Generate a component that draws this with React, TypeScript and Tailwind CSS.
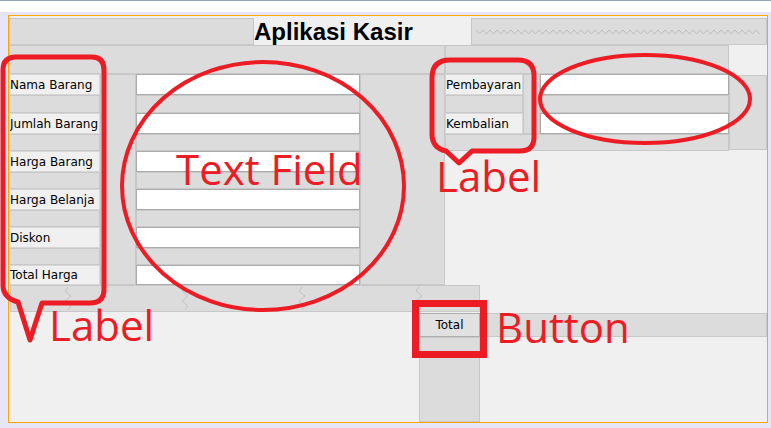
import React from 'react'

const gapBox = 'bg-[#dcdcdc] border border-[#c8c8c8]'
const labelBox = 'bg-[#f0f0f0] border border-[#d6d6d6] flex items-center text-[12px] text-black whitespace-nowrap overflow-hidden'
const fieldBox = 'bg-white border border-[#ababab]'

const leftLabels = ['Nama Barang', 'Jumlah Barang', 'Harga Barang', 'Harga Belanja', 'Diskon', 'Total Harga']
const rowHeights = [21, 21, 21, 21, 21, 20]
const gapHeights = [18, 17, 17, 17, 17]

function zigzagPoints(width: number) {
  const pts: string[] = []
  for (let x = 0, i = 0; x <= width; x += 3.5, i++) {
    pts.push(`${x},${i % 2 === 0 ? 2 : 6}`)
  }
  return pts.join(' ')
}

function VZigzag() {
  return (
    <svg width="8" height="25" viewBox="0 0 8 25" className="shrink-0">
      <polyline points="4,1 1,5 7,10 1,15 7,20 4,24" fill="none" stroke="#c2c2c2" strokeWidth="1" />
    </svg>
  )
}

function FormColumn({ width, labels }: { width: string; labels?: string[] }) {
  return (
    <div className={`${width} flex flex-col`}>
      {rowHeights.map((h, i) => (
        <React.Fragment key={i}>
          {labels ? (
            <div className={labelBox} style={{ height: h }}>{labels[i]}</div>
          ) : (
            <div className={fieldBox} style={{ height: h }} />
          )}
          {i < gapHeights.length && <div className={gapBox} style={{ height: gapHeights[i] }} />}
        </React.Fragment>
      ))}
    </div>
  )
}

export default function App() {
  return (
    <div className="relative w-[771px] h-[428px] overflow-hidden bg-[#e6e6f8] font-['DejaVu_Sans',sans-serif]">
      {/* strip atas */}
      <div className="h-[12px] bg-white border-t border-[#8fa5bf]" />

      {/* frame desain */}
      <div className="mt-[3px] ml-[8px] w-[760px] h-[408px] border border-[#ffa500] bg-[#f0f0f0] flex flex-col">
        {/* judul */}
        <div className="mt-[2px] h-[27px] flex">
          <div className={`w-[245px] ${gapBox}`} />
          <div className="w-[217px] flex items-center font-['Liberation_Sans',sans-serif] text-[24px] font-bold text-black leading-none">
            Aplikasi Kasir
          </div>
          <div className={`flex-1 ${gapBox} flex items-center pl-[4px]`}>
            <svg width="286" height="8" viewBox="0 0 286 8">
              <polyline points={zigzagPoints(286)} fill="none" stroke="#bdbdbd" strokeWidth="1" />
            </svg>
          </div>
        </div>

        {/* form */}
        <div className="flex items-start">
          <div className="w-[436px] h-[240px] flex flex-col bg-[#dcdcdc]">
            <div className={`h-[29px] ${gapBox}`} />
            <div className="flex h-[211px]">
              <FormColumn width="w-[91px]" labels={leftLabels} />
              <div className={`w-[36px] ${gapBox}`} />
              <FormColumn width="w-[224px]" />
              <div className={`w-[85px] ${gapBox}`} />
            </div>
          </div>

          <div className="w-[284px] h-[106px] flex flex-col bg-[#dcdcdc]">
            <div className={`h-[29px] ${gapBox}`} />
            <div className="flex">
              <div className="w-[78px] flex flex-col">
                <div className={`h-[21px] ${labelBox}`}>Pembayaran</div>
                <div className={`h-[18px] ${gapBox}`} />
                <div className={`h-[21px] ${labelBox}`}>Kembalian</div>
              </div>
              <div className={`w-[17px] h-[60px] ${gapBox}`} />
              <div className="w-[189px] flex flex-col">
                <div className={`h-[21px] ${fieldBox}`} />
                <div className={`h-[18px] ${gapBox}`} />
                <div className={`h-[21px] ${fieldBox}`} />
              </div>
            </div>
            <div className={`h-[17px] ${gapBox}`} />
          </div>

          <div className={`mt-[30px] w-[38px] h-[75px] ${gapBox}`} />
        </div>

        {/* strip bawah */}
        <div className={`ml-px w-[470px] h-[27px] ${gapBox} flex items-center pl-[53px] gap-[109px]`}>
          <VZigzag />
          <VZigzag />
          <VZigzag />
          <VZigzag />
        </div>

        {/* tombol */}
        <div className="flex flex-1">
          <div className="w-[410px]" />
          <div className="w-[61px] flex flex-col pt-px">
            <button className="h-[24px] bg-[#e1e1e1] border border-[#adadad] text-[12px] text-black leading-none">
              Total
            </button>
            <div className={`flex-1 ${gapBox}`} />
          </div>
          <div className="flex-1 pt-px">
            <div className={`h-[24px] ${gapBox}`} />
          </div>
        </div>
      </div>

      {/* anotasi merah */}
      <svg className="absolute inset-0 pointer-events-none" width="771" height="428" viewBox="0 0 771 428">
        <g fill="none" stroke="#ed1c24" strokeLinejoin="round">
          <path
            d="M 16 57 L 92 57 Q 104 57 104 70 L 104 289 Q 104 303 90 303 L 42 303 L 30 340 L 18 302 Q 3 298 3 285 L 3 70 Q 3 57 16 57 Z"
            strokeWidth="5"
          />
          <ellipse cx="263" cy="186" rx="141" ry="124" strokeWidth="4" />
          <path
            d="M 450 60 L 518 60 Q 534 60 534 76 L 534 137 Q 534 151 520 151 L 472 151 L 459 163 L 446 151 Q 432 148 432 134 L 432 78 Q 432 60 450 60 Z"
            strokeWidth="5"
          />
          <ellipse cx="645" cy="99" rx="105" ry="44" strokeWidth="4" />
          <rect x="415.5" y="303.5" width="68" height="51" strokeWidth="7" strokeLinejoin="miter" />
        </g>
      </svg>
      <div className="absolute left-[176px] top-[148px] font-['Open_Sans',sans-serif] text-[42px] leading-none text-[#ed1c24] whitespace-nowrap">
        Text Field
      </div>
      <div className="absolute left-[49px] top-[304px] font-['Open_Sans',sans-serif] text-[42px] leading-none text-[#ed1c24]">
        Label
      </div>
      <div className="absolute left-[436px] top-[155px] font-['Open_Sans',sans-serif] text-[42px] leading-none text-[#ed1c24]">
        Label
      </div>
      <div className="absolute left-[496px] top-[306px] font-['Open_Sans',sans-serif] text-[42px] leading-none text-[#ed1c24]">
        Button
      </div>
    </div>
  )
}
